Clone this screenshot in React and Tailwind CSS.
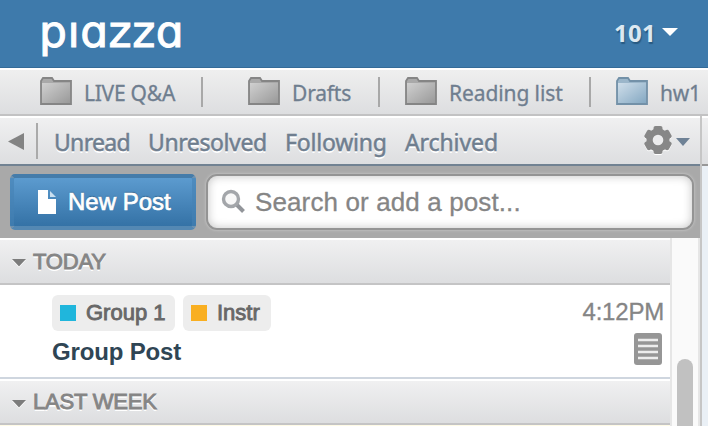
const folders = [
  { name: "LIVE Q&A", item: "w-[161px]", gap: "mr-[45px]", label: "tracking-[-0.25px]" },
  { name: "Drafts", item: "w-[130px]", gap: "mr-[25px]", label: "tracking-[-0.2px]" },
  { name: "Reading list", item: "w-[184px]", gap: "mr-[25px]", label: "tracking-[-0.1px]" },
  { name: "hw1", item: "w-[110px]", label: "tracking-[-0.2px]", blue: true },
];

const filters = [
  { name: "Unread", width: "w-[94px]", label: "tracking-[-0.7px]" },
  { name: "Unresolved", width: "w-[137px]", label: "tracking-[-0.4px]" },
  { name: "Following", width: "w-[120px]", label: "tracking-[-0.2px]" },
  { name: "Archived", width: "w-[100px]", label: "tracking-[-0.1px]" },
];

function FolderIcon({ blue }) {
  const id = blue ? "folder-blue" : "folder-gray";
  const line = blue ? "#7391a8" : "#858585";
  return (
    <svg width="32" height="28" viewBox="0 0 32 28" className="mb-[3px] shrink-0">
      <defs>
        <linearGradient id={id} x1="0" y1="0" x2="1" y2="1">
          <stop offset="0" stopColor={blue ? "#cfdeea" : "#d0d0d0"} />
          <stop offset="1" stopColor={blue ? "#84a8c2" : "#999999"} />
        </linearGradient>
      </defs>
      <path
        d="M1 4L3 1H12L14 4H31V27H1Z"
        fill={blue ? "#9bb6ca" : "#a9a9a9"}
        stroke={line}
        strokeWidth="1.8"
      />
      <path d="M2 6H30V26H2Z" fill={`url(#${id})`} />
    </svg>
  );
}

function GearIcon() {
  return (
    <svg
      width="28"
      height="28"
      viewBox="-14 -14 28 28"
      className="shrink-0 drop-shadow-[0_1px_0_white]"
    >
      <g fill="#878787">
        {[0, 60, 120].map((angle) => (
          <rect
            key={angle}
            x="-4.5"
            y="-14"
            width="9"
            height="28"
            rx="2"
            transform={`rotate(${angle})`}
          />
        ))}
        <circle r="11.5" />
      </g>
      <circle r="5.3" fill="#ececed" />
    </svg>
  );
}

function SectionHeader({ title, className }) {
  return (
    <div
      className={`flex items-center border-t-2 border-t-white border-b-2 border-b-[#c4c4c5] bg-linear-to-b from-[#f0f0f1] to-[#dddee0] pl-[12px] ${className}`}
    >
      <svg
        width="14"
        height="8"
        viewBox="0 0 14 8"
        className="mt-[3px] mr-[7px] drop-shadow-[0_1px_0_white]"
      >
        <path d="M0 0H14L7 7.5Z" fill="#7c7c7c" />
      </svg>
      <span className="text-[22px] leading-none tracking-[-0.2px] text-[#858585] [-webkit-text-stroke:0.9px_#858585] [text-shadow:0_2px_0_white]">
        {title}
      </span>
    </div>
  );
}

function Tag({ name, width, color }) {
  return (
    <span
      className={`flex h-9 items-center rounded-[6px] bg-[#ededed] pl-2 ${width}`}
    >
      <span className={`mr-[10px] size-4 ${color}`} />
      <span className="text-[22px] leading-none text-[#686868] [-webkit-text-stroke:0.9px_#686868]">
        {name}
      </span>
    </span>
  );
}

export default function App() {
  return (
    <div className="flex h-[426px] w-[708px] flex-col overflow-hidden bg-white font-['Liberation_Sans',sans-serif] whitespace-nowrap">
      <header className="flex h-[68px] shrink-0 justify-between border-b border-[#346b98] bg-[#3e7aab] pr-[30px] pl-[39px]">
        <span className="pt-[9px] font-['DejaVu_Sans',sans-serif] text-[44px] leading-[46px] tracking-[0.5px] text-white [-webkit-text-stroke:1px_white]">
          pıɑzzɑ
        </span>
        <button className="flex items-center gap-[6px]">
          <span className="pb-[1px] font-['Noto_Sans',sans-serif] text-[24px] leading-none font-bold tracking-[0.3px] text-[#dce8f1] [text-shadow:1px_2px_1px_#285a82]">
            101
          </span>
          <svg width="16" height="8" viewBox="0 0 16 8" className="mb-1">
            <path d="M0 0H16L8 8Z" fill="white" />
          </svg>
        </button>
      </header>

      <nav className="flex h-12 shrink-0 items-center border-t-2 border-t-white border-b-2 border-b-[#c2c2c3] bg-linear-to-b from-[#efefef] to-[#dddee0] pl-[40px]">
        {folders.map((f) => (
          <div key={f.name} className="flex shrink-0 items-center">
            <div className={`flex items-center gap-[12px] ${f.item}`}>
              <FolderIcon blue={f.blue} />
              <span
                className={`pt-[2px] font-['Noto_Sans',sans-serif] text-[21px] leading-none text-[#6f7e8f] [-webkit-text-stroke:0.3px_#6f7e8f] ${f.label}`}
              >
                {f.name}
              </span>
            </div>
            {f.gap && <div className={`h-[30px] w-[2px] bg-[#a8a8a8] ${f.gap}`} />}
          </div>
        ))}
      </nav>

      <div className="flex min-h-0 flex-1">
        <main className="flex w-[702px] shrink-0 flex-col border-r-2 border-[#c6c6c6]">
          <div className="flex h-[50px] shrink-0 items-center border-t-2 border-t-white border-b-2 border-b-[#718292] bg-linear-to-b from-[#f0f0f1] to-[#dddee0] pl-[8px]">
            <svg width="16" height="17" viewBox="0 0 16 17" className="shrink-0">
              <path d="M0 8.5L16 0V17Z" fill="#838383" />
            </svg>
            <div className="mr-[16px] ml-[12px] h-9 w-[2px] bg-[#aaa]" />
            {filters.map((f) => (
              <span
                key={f.name}
                className={`shrink-0 pt-[3px] font-['Noto_Sans',sans-serif] text-[23px] leading-none text-[#6f7e8f] [-webkit-text-stroke:0.5px_#6f7e8f] [text-shadow:0_2px_0_white] ${f.width} ${f.label}`}
              >
                {f.name}
              </span>
            ))}
            <div className="ml-auto flex items-center gap-[4px] pr-[10px] pb-[2px]">
              <GearIcon />
              <svg width="14" height="8" viewBox="0 0 14 8" className="mt-1">
                <path d="M0 0H14L7 8Z" fill="#6f8296" />
              </svg>
            </div>
          </div>

          <div className="flex h-[72px] shrink-0 gap-[10px] bg-[#a9a9a9] pt-2 pl-[10px]">
            <button className="flex h-14 w-[186px] items-center rounded-[5px] border-4 border-t-[#457caa] border-r-[#4682b4]/60 border-b-[#5488b3] border-l-[#4682b4]/60 bg-linear-to-b from-[#5c9bcf] to-[#3472a6] pl-[24px]">
              <svg width="18" height="24" viewBox="0 0 18 24" className="mr-[12px]">
                <path d="M0 0H10V9H18V24H0Z" fill="white" />
                <path d="M12 1L18 7H12Z" fill="#c9dff0" />
              </svg>
              <span className="text-[24px] leading-none text-white [-webkit-text-stroke:0.7px_white] [text-shadow:0_-1px_1px_#2c608c]">
                New Post
              </span>
            </button>
            <div className="flex h-14 w-[488px] items-center rounded-[11px] border-2 border-[#949494] bg-white pl-[13px] shadow-[inset_0_0_10px_#c4c4c4,0_0_3px_#d0d0d0]">
              <svg width="26" height="26" viewBox="0 0 26 26" className="mr-[8px]">
                <path d="M15 15L22.5 22.5" stroke="#92959a" strokeWidth="4" />
                <circle
                  cx="10"
                  cy="10"
                  r="7.5"
                  fill="#f8f8f8"
                  stroke="#a3a6aa"
                  strokeWidth="3.4"
                />
              </svg>
              <span className="pb-[1px] text-[26px] leading-none tracking-[0.12px] text-[#858585] [-webkit-text-stroke:0.3px_#858585]">
                Search or add a post...
              </span>
            </div>
          </div>

          <div className="flex min-h-0 flex-1">
            <section className="flex w-[670px] shrink-0 flex-col">
              <SectionHeader title="TODAY" className="h-[47px]" />
              <article className="flex h-[94px] shrink-0 justify-between border-b-2 border-[#cfd6df] pt-[10px] pr-[6px] pl-[52px]">
                <div>
                  <div className="flex gap-2">
                    <Tag name="Group 1" width="w-[123px]" color="bg-[#20b6dc]" />
                    <Tag name="Instr" width="w-[88px]" color="bg-[#f9af21]" />
                  </div>
                  <h2 className="mt-[9px] text-[24px] leading-none font-bold tracking-[-0.15px] text-[#2f4554]">
                    Group Post
                  </h2>
                </div>
                <div className="flex flex-col items-end pt-[5px]">
                  <time className="text-[24px] leading-none tracking-[-0.2px] text-[#858585] [-webkit-text-stroke:0.3px_#858585]">
                    4:12PM
                  </time>
                  <svg
                    width="28"
                    height="32"
                    viewBox="0 0 28 32"
                    className="mt-[9px] mr-[2px]"
                  >
                    <rect width="28" height="32" rx="3" fill="#969696" />
                    <path
                      d="M4 7H24M4 13H24M4 19H24M4 25H24"
                      stroke="#ededed"
                      strokeWidth="2.5"
                    />
                  </svg>
                </div>
              </article>
              <SectionHeader title="LAST WEEK" className="h-[46px] shrink-0" />
              <div className="h-px shrink-0 bg-[#fffbe6]" />
            </section>
            <div className="flex w-[30px] justify-center border-r-2 border-l-2 border-[#e6e6e6] bg-[#fafafa] pt-[121px]">
              <div className="h-[80px] w-4 shrink-0 rounded-full bg-[#c1c1c1]" />
            </div>
          </div>
        </main>
        <aside className="flex-1 bg-[#eaf0f6]">
          <div className="h-[50px] border-t-2 border-t-white border-b-2 border-b-[#979797] bg-linear-to-b from-[#f0f0f1] to-[#dddee0]" />
        </aside>
      </div>
    </div>
  );
}
